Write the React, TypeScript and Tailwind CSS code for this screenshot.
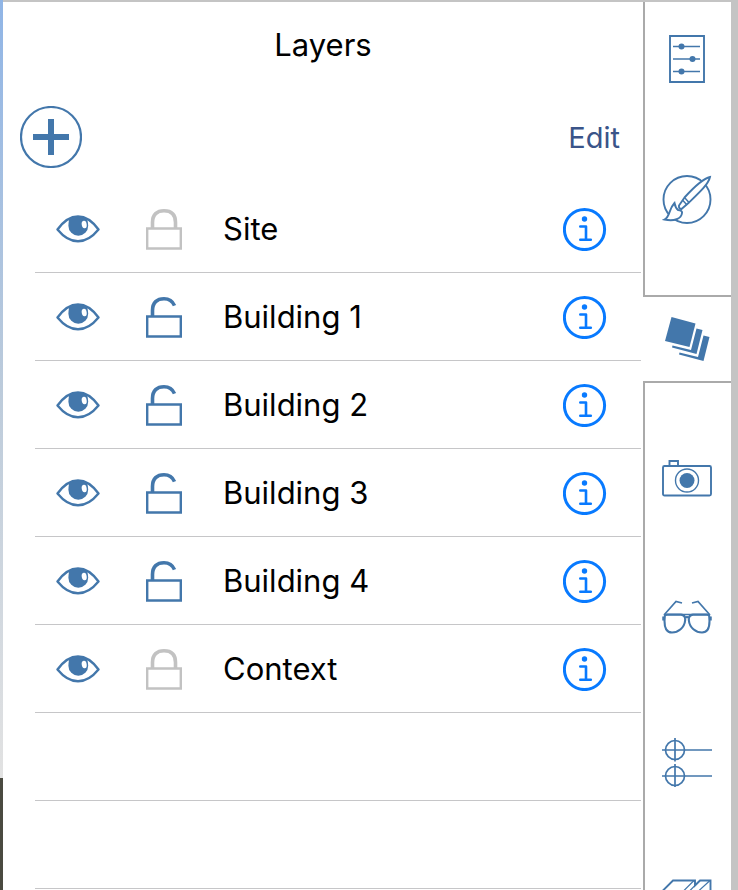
import { useState, type ReactNode } from "react";

type Layer = { name: string; visible: boolean; locked: boolean };

const initialLayers: Layer[] = [
  { name: "Site", visible: true, locked: true },
  { name: "Building 1", visible: true, locked: false },
  { name: "Building 2", visible: true, locked: false },
  { name: "Building 3", visible: true, locked: false },
  { name: "Building 4", visible: true, locked: false },
  { name: "Context", visible: true, locked: true },
];

function PlusIcon() {
  return (
    <svg width="62" height="62" viewBox="0 0 62 62" fill="none" stroke="#4377ab" aria-hidden="true">
      <circle cx="31" cy="31" r="30" strokeWidth="2.2" />
      <path d="M31 13v36M13 31h36" strokeWidth="6" />
    </svg>
  );
}

function EyeIcon() {
  return (
    <svg width="44" height="28" viewBox="0 0 44 28" aria-hidden="true">
      <path d="M1.500 14.500C8 5.500 14.500 1.500 22 1.500S36 5.500 42.500 14.500C36 22.500 29.500 26.300 22 26.300S8 22.500 1.500 14.500Z" fill="white" stroke="#4377ab" strokeWidth="2.400" strokeLinejoin="round" />
      <path d="M13.400 3.500Q22 -0.500 30.800 3.500Q32.200 7 32.200 10.800A9.900 9.900 0 0 1 12.400 10.800Q12.400 7 13.400 3.500Z" fill="#4377ab" />
      <ellipse cx="28.200" cy="9.500" rx="2.500" ry="3.800" fill="white" transform="rotate(-8 28.200 9.500)" />
    </svg>
  );
}

function LockIcon({ locked }: { locked: boolean }) {
  return (
    <svg width="36" height="42" viewBox="0 0 36 42" fill="none" stroke={locked ? "#c2c2c2" : "#4377ab"} aria-hidden="true">
      <path d="M1.200 20.500h33.600v20H1.200Z" strokeWidth="2.400" />
      <path d={locked ? "M6.500 20.500v-6C6.500 6.500 11 2.800 18 2.800S29.500 6.500 29.500 14.500v6" : "M6.500 20.500v-6C6.500 6.500 11 2.800 18 2.800c5 0 8.500 2.200 10.500 6.800"} strokeWidth="3.600" />
    </svg>
  );
}

function InfoIcon() {
  return (
    <svg width="44" height="44" viewBox="0 0 44 44" fill="none" stroke="#087aff" aria-hidden="true">
      <circle cx="21.500" cy="22.500" r="20.100" strokeWidth="3" />
      <circle cx="21.500" cy="12" r="2.700" fill="#087aff" stroke="none" />
      <path d="M17.300 19.500h5.700v13.300M17.300 32.800h10.500" strokeWidth="2.600" strokeLinecap="round" strokeLinejoin="round" />
    </svg>
  );
}

function RailSvg({ children }: { children: ReactNode }) {
  return (
    <svg width="50" height="50" viewBox="0 0 50 50" fill="none" stroke="#4377ab" strokeWidth="1.900" aria-hidden="true">
      {children}
    </svg>
  );
}

const slidersIcon = (
  <RailSvg>
    <path d="M8 2h34v46H8Z" />
    <path d="M11 12.500h27M11 25h27M11 37.500h27" strokeWidth="1.500" />
    <g fill="#4377ab" stroke="none">
      <circle cx="19.500" cy="12.500" r="3" />
      <circle cx="30.500" cy="25" r="3" />
      <circle cx="19.500" cy="37.500" r="3" />
    </g>
  </RailSvg>
);

const brushIcon = (
  <RailSvg>
    <circle cx="25" cy="24.500" r="23.500" />
    <path d="M48 2C41 3.500 33 11 22.500 22.500L17 30.500Q16.500 34 19.500 34L27 27.500C38 17 46.500 9 48 2Z" fill="white" />
    <path d="M22.500 22.500l4.500 5M20.500 25l4.500 5" strokeWidth="1.500" />
    <path d="M12.500 28Q13.500 33 16 35Q20.500 35.500 20 38C19.500 44 12 46.500 2.500 44.500C8.500 41.500 6 35 12.500 28Z" fill="white" />
  </RailSvg>
);

const layersIcon = (
  <RailSvg>
    <g fill="#4377ab" stroke="none">
      <path d="M9.500 3L33.500 9.500L27.500 33L3 27Z" />
      <path d="M34.500 14.500L40.500 16L34.500 40L10 33.500L10.500 31.500L29 36Z" />
      <path d="M41.500 21.500L47.500 23L41.500 47L17 40.500L17.500 38.500L36 43Z" />
    </g>
  </RailSvg>
);

const cameraIcon = (
  <RailSvg>
    <rect x="1" y="11" width="48" height="29.500" rx="1.500" />
    <path d="M7.500 11V6h8.500V11" />
    <circle cx="25" cy="25.500" r="11.500" strokeWidth="1.400" />
    <circle cx="25" cy="25.500" r="7.500" fill="#4377ab" stroke="none" />
  </RailSvg>
);

const glassesIcon = (
  <RailSvg>
    <path d="M2 19L14 5.500l6 1.500M48 19L36 5.500l-6 1.500" strokeWidth="1.700" />
    <path d="M3 18.500H47" strokeWidth="1.500" />
    <path d="M1.500 20.500v4M48.500 20.500v4" strokeWidth="2.500" />
    <path d="M2.800 20Q3 18.600 5 18.600H19Q23.500 19 23.200 24C22.500 32 16 36.500 10 36.500C4.500 36.500 2.500 32 2.500 25ZM47.200 20Q47 18.600 45 18.600H31Q26.500 19 26.800 24C27.500 32 34 36.500 40 36.500C45.500 36.500 47.500 32 47.500 25ZM22.500 21.500q2.500-.8 5 0" strokeWidth="2.100" strokeLinejoin="round" />
  </RailSvg>
);

const sectionsIcon = (
  <RailSvg>
    <g strokeWidth="1.700">
      <circle cx="13" cy="13" r="9.500" />
      <circle cx="13" cy="39" r="9.500" />
      <path d="M0 13h50M0 39h50M13 1v23.500M13 27v23" />
    </g>
  </RailSvg>
);

const blocksIcon = (
  <RailSvg>
    <path d="M0 13.500L11 2.500H33v5L38 2.500H48.500V40H0Z" />
    <path d="M21 13.500L32 2.500M27 13.500L38 2.500M36 13.500L48 2.500" strokeWidth="1.200" />
  </RailSvg>
);

function RailButton({ label, active, children }: { label: string; active?: boolean; children: ReactNode }) {
  return (
    <button
      type="button"
      aria-label={label}
      aria-pressed={!!active}
      className={
        active
          ? "flex h-22 shrink-0 items-center justify-center border-y-2 border-[#aaaaaa]"
          : "flex h-[141px] shrink-0 items-center justify-center pr-0.5"
      }
    >
      {children}
    </button>
  );
}

export default function App() {
  const [layers, setLayers] = useState(initialLayers);
  const toggle = (index: number, key: "visible" | "locked") =>
    setLayers(layers.map((l, i) => (i === index ? { ...l, [key]: !l[key] } : l)));

  return (
    <div className="flex h-screen overflow-hidden bg-white font-[Inter,'Liberation_Sans',sans-serif] text-black">
      <div className="flex w-[3px] shrink-0 flex-col">
        <div className="h-[778px] shrink-0 bg-linear-to-b from-[#90b5e6] via-[#bccbdb] to-[#e2e2e2]" />
        <div className="grow bg-[#4a4a40]" />
      </div>

      <div className="flex min-w-0 grow border-t-2 border-r-7 border-[#c4c4c4]">
        <main className="min-w-0 grow">
          <h1 className="flex h-[87px] items-center justify-center text-[31px]">Layers</h1>
          <div className="flex h-24 items-center justify-between pr-[23px] pl-[17px]">
            <button type="button" aria-label="Add layer"><PlusIcon /></button>
            <button type="button" className="pt-0.5 text-[29px] text-[#3a5489]">Edit</button>
          </div>

          <ul className="mr-0.5 ml-8">
            {layers.map((layer, i) => (
              <li key={layer.name} className="flex h-22 items-center border-b border-[#c6c6c8] pr-[34px] pl-[21px]">
                <button type="button" aria-label={"Toggle visibility of " + layer.name} onClick={() => toggle(i, "visible")} className={layer.visible ? "" : "opacity-30"}>
                  <EyeIcon />
                </button>
                <button type="button" aria-label={"Toggle lock on " + layer.name} onClick={() => toggle(i, "locked")} className="ml-[46px]">
                  <LockIcon locked={layer.locked} />
                </button>
                <span className="ml-[41px] grow pt-0.5 text-[31px]">{layer.name}</span>
                <button type="button" aria-label={"Details of " + layer.name}><InfoIcon /></button>
              </li>
            ))}
            <li className="h-22 border-b border-[#c6c6c8]" />
            <li className="h-22 border-b border-[#c6c6c8]" />
          </ul>
        </main>

        <nav aria-label="Tools" className="flex w-22 shrink-0 flex-col">
          <div className="flex h-[293px] shrink-0 flex-col border-l-2 border-[#aaaaaa]">
            <div className="-mt-3.5 flex flex-col">
              <RailButton label="Settings">{slidersIcon}</RailButton>
              <RailButton label="Styles">{brushIcon}</RailButton>
            </div>
          </div>
          <RailButton label="Layers" active>{layersIcon}</RailButton>
          <div className="flex grow flex-col border-l-2 border-[#aaaaaa] pt-[26px]">
            <RailButton label="Scenes">{cameraIcon}</RailButton>
            <RailButton label="Views">{glassesIcon}</RailButton>
            <RailButton label="Section planes">{sectionsIcon}</RailButton>
            <RailButton label="Components">{blocksIcon}</RailButton>
          </div>
        </nav>
      </div>
    </div>
  );
}
